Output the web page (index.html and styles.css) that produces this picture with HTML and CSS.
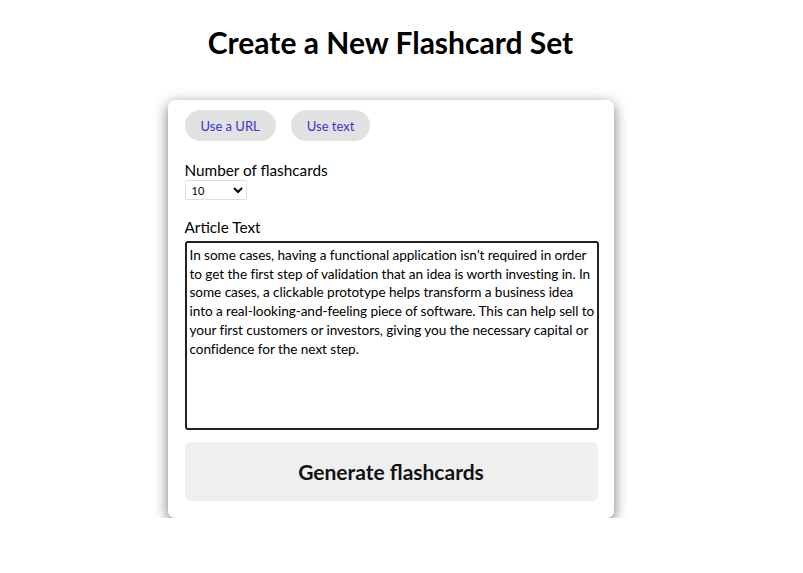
FILE: index.html
```html
<!DOCTYPE html>
<html>
<head>
<meta charset="utf-8">
<link rel="stylesheet" href="styles.css">
</head>
<body>
<div class="page">
  <h1 class="title">Create a New Flashcard Set</h1>
  <div class="card">
    <div class="tabs">
      <button class="tab">Use a URL</button>
      <button class="tab">Use text</button>
    </div>
    <label class="label" for="num">Number of flashcards</label>
    <select id="num" class="select">
      <option>10</option>
    </select>
    <label class="label label-article" for="txt">Article Text</label>
    <textarea id="txt" class="textarea">In some cases, having a functional application isn’t required in order to get the first step of validation that an idea is worth investing in. In some cases, a clickable prototype helps transform a business idea into a real-looking-and-feeling piece of software. This can help sell to your first customers or investors, giving you the necessary capital or confidence for the next step.</textarea>
    <button class="generate">Generate flashcards</button>
  </div>
</div>
</body>
</html>
```
FILE: styles.css
```css
html, body {
  margin: 0;
  padding: 0;
  background: #fff;
}
body {
  font-family: "Lato", "Open Sans", sans-serif;
  color: #000;
}
.page {
  display: flex;
  flex-direction: column;
  align-items: center;
  padding-top: 22px;
  padding-right: 22px;
}
.title {
  margin: 0;
  font-size: 30px;
  font-weight: 700;
  line-height: 40px;
}
.card {
  margin-top: 38px;
  width: 414px;
  padding: 10px 15px 17px 17px;
  background: #fff;
  border-radius: 7px;
  box-shadow: 0 4px 14px rgba(0,0,0,0.55);
  display: flex;
  flex-direction: column;
  align-items: flex-start;
}
.tabs {
  display: flex;
  gap: 15px;
}
.tab {
  font-family: inherit;
  font-size: 13px;
  color: #3a32d8;
  background: #e2e2e2;
  border: none;
  border-radius: 16px;
  height: 31px;
  padding: 0 16px;
}
.label {
  margin-top: 19px;
  font-size: 15.3px;
  line-height: 20px;
}
.label-article {
  margin-top: 17px;
}
.select {
  margin-top: 0;
  width: 62px;
  height: 20px;
  font-family: inherit;
  font-size: 11px;
  border: 1px solid #ddd;
  border-radius: 2px;
  background: #fff;
  padding: 0 2px;
}
.textarea {
  margin-top: 4px;
  box-sizing: border-box;
  width: 414px;
  height: 189px;
  border: 2px solid #222;
  border-radius: 3px;
  padding: 3px 1px 3px 3px;
  font-family: inherit;
  font-size: 13.6px;
  letter-spacing: -0.06px;
  line-height: 18.7px;
  resize: none;
  outline: none;
}
.generate {
  margin-top: 12px;
  width: 413px;
  height: 59px;
  border: none;
  border-radius: 6px;
  background: #efefef;
  font-family: inherit;
  font-size: 21px;
  font-weight: 700;
  color: #111;
}
```
